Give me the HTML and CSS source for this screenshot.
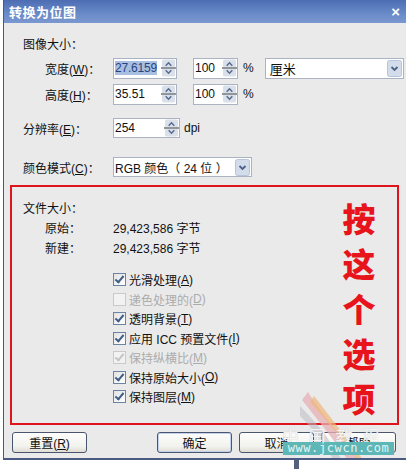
FILE: index.html
```html
<!DOCTYPE html>
<html lang="zh-CN">
<head>
  <meta charset="UTF-8" />
  <title>转换为位图</title>
  <link rel="stylesheet" href="styles.css">
</head>
<body>
  <div class="dialog">
    <div class="titlebar">
      <span class="title">转换为位图</span>
      <span class="close">×</span>
    </div>

    <div class="row head">图像大小：</div>

    <div class="row field">
      <span class="lbl sub">宽度(<u>W</u>)：</span>
      <div class="spin w-size"><span class="val"><span class="sel">27.6159</span></span>
        <svg width="15" height="20" viewBox="0 0 16 20"><rect x="1" y="1" width="14" height="18" rx="2" fill="#d9e0ea"/><path d="M5 7.5 L8 4.5 L11 7.5" stroke="#566a8e" stroke-width="1.6" fill="none"/><rect x="0" y="9" width="16" height="2" fill="#8d9097"/><path d="M5 12.5 L8 15.5 L11 12.5" stroke="#566a8e" stroke-width="1.6" fill="none"/></svg>
      </div>
      <div class="spin w-pct"><span class="val">100</span>
        <svg width="15" height="20" viewBox="0 0 16 20"><rect x="1" y="1" width="14" height="18" rx="2" fill="#d9e0ea"/><path d="M5 7.5 L8 4.5 L11 7.5" stroke="#566a8e" stroke-width="1.6" fill="none"/><rect x="0" y="9" width="16" height="2" fill="#8d9097"/><path d="M5 12.5 L8 15.5 L11 12.5" stroke="#566a8e" stroke-width="1.6" fill="none"/></svg>
      </div>
      <span class="unit">%</span>
      <div class="combo units"><span class="val">厘米</span>
        <svg class="drop" width="15" height="17" viewBox="0 0 15 17"><rect x="0.5" y="0.5" width="14" height="16" rx="2" fill="#d3dcea" stroke="#b7c4d8"/><path d="M4.5 7 L7.5 10 L10.5 7" stroke="#4d6185" stroke-width="1.8" fill="none"/></svg>
      </div>
    </div>

    <div class="row field">
      <span class="lbl sub">高度(<u>H</u>)：</span>
      <div class="spin w-size"><span class="val">35.51</span>
        <svg width="15" height="20" viewBox="0 0 16 20"><rect x="1" y="1" width="14" height="18" rx="2" fill="#d9e0ea"/><path d="M5 7.5 L8 4.5 L11 7.5" stroke="#566a8e" stroke-width="1.6" fill="none"/><rect x="0" y="9" width="16" height="2" fill="#8d9097"/><path d="M5 12.5 L8 15.5 L11 12.5" stroke="#566a8e" stroke-width="1.6" fill="none"/></svg>
      </div>
      <div class="spin w-pct"><span class="val">100</span>
        <svg width="15" height="20" viewBox="0 0 16 20"><rect x="1" y="1" width="14" height="18" rx="2" fill="#d9e0ea"/><path d="M5 7.5 L8 4.5 L11 7.5" stroke="#566a8e" stroke-width="1.6" fill="none"/><rect x="0" y="9" width="16" height="2" fill="#8d9097"/><path d="M5 12.5 L8 15.5 L11 12.5" stroke="#566a8e" stroke-width="1.6" fill="none"/></svg>
      </div>
      <span class="unit">%</span>
    </div>

    <div class="row field res">
      <span class="lbl">分辨率(<u>E</u>)：</span>
      <div class="spin w-res"><span class="val">254</span>
        <svg width="15" height="20" viewBox="0 0 16 20"><rect x="1" y="1" width="14" height="18" rx="2" fill="#d9e0ea"/><path d="M5 7.5 L8 4.5 L11 7.5" stroke="#566a8e" stroke-width="1.6" fill="none"/><rect x="0" y="9" width="16" height="2" fill="#8d9097"/><path d="M5 12.5 L8 15.5 L11 12.5" stroke="#566a8e" stroke-width="1.6" fill="none"/></svg>
      </div>
      <span class="unit dpi">dpi</span>
    </div>

    <div class="row field mode">
      <span class="lbl">颜色模式(<u>C</u>)：</span>
      <div class="combo colors"><span class="val">RGB 颜色（ 24 位 ）</span>
        <svg class="drop" width="15" height="17" viewBox="0 0 15 17"><rect x="0.5" y="0.5" width="14" height="16" rx="2" fill="#d3dcea" stroke="#b7c4d8"/><path d="M4.5 7 L7.5 10 L10.5 7" stroke="#4d6185" stroke-width="1.8" fill="none"/></svg>
      </div>
    </div>

    <div class="redbox">
      <div class="opts">
        <div class="line">文件大小：</div>
        <div class="line"><span class="lbl sub">原始：</span><span>29,423,586 字节</span></div>
        <div class="line"><span class="lbl sub">新建：</span><span>29,423,586 字节</span></div>

        <div class="checks">
          <div class="chk"><span class="box on"></span>光滑处理(<u>A</u>)</div>
          <div class="chk off"><span class="box"></span>递色处理的(<u>D</u>)</div>
          <div class="chk"><span class="box on"></span>透明背景(<u>T</u>)</div>
          <div class="chk"><span class="box on"></span>应用 ICC 预置文件(<u>I</u>)</div>
          <div class="chk off"><span class="box on"></span>保持纵横比(<u>M</u>)</div>
          <div class="chk"><span class="box on"></span>保持原始大小(<u>O</u>)</div>
          <div class="chk"><span class="box on"></span>保持图层(<u>M</u>)</div>
        </div>
      </div>
      <div class="note">
        <span>按</span><span>这</span><span>个</span><span>选</span><span>项</span>
      </div>
    </div>

    <div class="buttons">
      <button class="btn">重置(<u>R</u>)</button>
      <div class="right">
        <button class="btn default">确定</button>
        <button class="btn">取消</button>
        <button class="btn">帮助</button>
      </div>
    </div>

    <!-- watermark from the source image -->
    <svg class="swoosh" width="70" height="80" viewBox="0 0 70 80">
      <path d="M8 0 C20 20 40 40 66 78 L56 80 C36 50 18 28 2 8 Z" fill="#e6b0b6" opacity="0.75"/>
      <path d="M14 4 C30 24 46 46 68 74 L66 78 C44 50 28 30 10 10 Z" fill="#efb67a" opacity="0.7"/>
      <path d="M0 14 C18 32 34 52 48 80 L40 80 C28 56 14 38 0 24 Z" fill="#b9b9c2" opacity="0.55"/>
    </svg>
    <div class="wm-cn">中 国 教 程 网</div>
    <div class="wm-url">www.jcwcn.com</div>
  </div>
  <div class="tick"></div>
</body>
</html>
```

FILE: styles.css
```css
body {
  margin: 0;
  background: #fff;
  font-family: "Liberation Sans", "Noto Sans CJK SC", sans-serif;
  font-size: 12px;
  color: #111;
}
u {
  text-decoration: underline;
  text-underline-offset: 1px;
}
.dialog {
  position: relative;
  margin-left: 3px;
  width: 403px;
  height: 460px;
  background: #eaeaea;
  border-left: 1px solid #4b5a82;
  border-bottom: 2px solid #4b5a82;
  box-sizing: border-box;
  overflow: hidden;
}
.titlebar {
  height: 23px;
  display: flex;
  align-items: center;
  justify-content: space-between;
  padding: 0 6px 0 5px;
  background: linear-gradient(#4c6db3, #6a8bc8 60%, #7a98d0);
  color: #fff;
  font-weight: bold;
}
.title {
  font-size: 13px;
  letter-spacing: 0.5px;
}
.close {
  font-size: 15px;
}
.row {
  display: flex;
  align-items: center;
  padding-left: 19px;
}
.head {
  height: 20px;
  margin-top: 10px;
}
.field {
  height: 22px;
  margin-top: 4px;
}
.res {
  margin-top: 12px;
}
.mode {
  margin-top: 17px;
}
.lbl {
  width: 90px;
  flex-shrink: 0;
}
.lbl.sub {
  margin-left: 22px;
  width: 68px;
}
.spin,
.combo {
  display: flex;
  align-items: center;
  height: 21px;
  box-sizing: border-box;
  background: #fff;
  border: 1px solid #a9b3c1;
}
.spin svg {
  margin-left: auto;
  flex-shrink: 0;
}
.val {
  padding-left: 1px;
  white-space: nowrap;
  overflow: hidden;
}
.sel {
  background: #a9bfe2;
  color: #27457c;
  letter-spacing: -0.2px;
}
.w-size {
  width: 64px;
}
.w-pct {
  width: 45px;
  margin-left: 16px;
}
.w-res {
  width: 67px;
  height: 20px;
}
.unit {
  margin-left: 5px;
}
.dpi {
  margin-left: 4px;
}
.combo .drop {
  margin-left: auto;
  margin-right: 1px;
  flex-shrink: 0;
}
.units {
  width: 139px;
  margin-left: 11px;
  font-size: 13px;
}
.units .val {
  padding-left: 4px;
}
.colors {
  width: 139px;
  height: 20px;
}
.redbox {
  display: flex;
  margin: 7px 0 0 6px;
  width: 389px;
  height: 240px;
  box-sizing: border-box;
  border: 2px solid #e0141c;
}
.opts {
  flex: 1;
  padding: 10px 0 0 11px;
}
.line {
  display: flex;
  align-items: center;
  height: 20px;
}
.line .lbl.sub {
  width: 68px;
}
.checks {
  margin: 13px 0 0 90px;
}
.chk {
  display: flex;
  align-items: center;
  height: 19.5px;
}
.chk.off {
  color: #acacac;
}
.box {
  width: 11px;
  height: 11px;
  margin-right: 3px;
  border: 1px solid #6c84a4;
  background: linear-gradient(135deg, #e2e2e2, #fff);
  position: relative;
  flex-shrink: 0;
}
.box.on::after {
  content: "";
  position: absolute;
  left: 3px;
  top: 0px;
  width: 3px;
  height: 7px;
  border: solid #3f5e86;
  border-width: 0 2px 2px 0;
  transform: rotate(40deg);
}
.chk.off .box {
  border-color: #cacaca;
  background: #f2f2f2;
}
.chk.off .box.on::after {
  border-color: #c4c4c4;
}
.note {
  display: flex;
  flex-direction: column;
  align-items: center;
  width: 60px;
  padding-top: 9px;
  margin-right: 8px;
  color: #e8141b;
  font-family: "Noto Sans CJK SC", sans-serif;
  font-weight: 900;
  font-size: 33px;
  line-height: 45px;
}
.buttons {
  display: flex;
  margin-top: 7px;
  padding: 0 10px 0 8px;
}
.right {
  display: flex;
  gap: 7px;
  margin-left: auto;
}
.btn {
  width: 75px;
  height: 21px;
  padding: 0;
  font-family: inherit;
  font-size: 12px;
  color: #111;
  border: 1px solid #4a5670;
  border-radius: 3px;
  background: linear-gradient(#fdfdfd, #f2f2ee 70%, #dedcd4);
}
.btn.default {
  box-shadow: inset 0 0 0 1px #c2d2ee;
}
.swoosh {
  position: absolute;
  left: 296px;
  top: 392px;
}
.wm-cn {
  position: absolute;
  left: 278px;
  top: 423px;
  font-family: "Noto Sans CJK SC", sans-serif;
  font-size: 17px;
  color: rgba(255, 255, 255, 0.85);
  text-shadow: 0 0 1px #bbb;
  letter-spacing: 3px;
}
.wm-url {
  position: absolute;
  left: 279px;
  top: 442px;
  width: 111px;
  height: 13px;
  background: #5db7b6;
  color: #e4f4f4;
  font-family: "DejaVu Sans Mono", monospace;
  font-size: 12px;
  line-height: 13px;
  letter-spacing: 0.6px;
  text-align: center;
}
.tick {
  margin-left: 294px;
  width: 5px;
  height: 9px;
  background: #55607c;
}
```
